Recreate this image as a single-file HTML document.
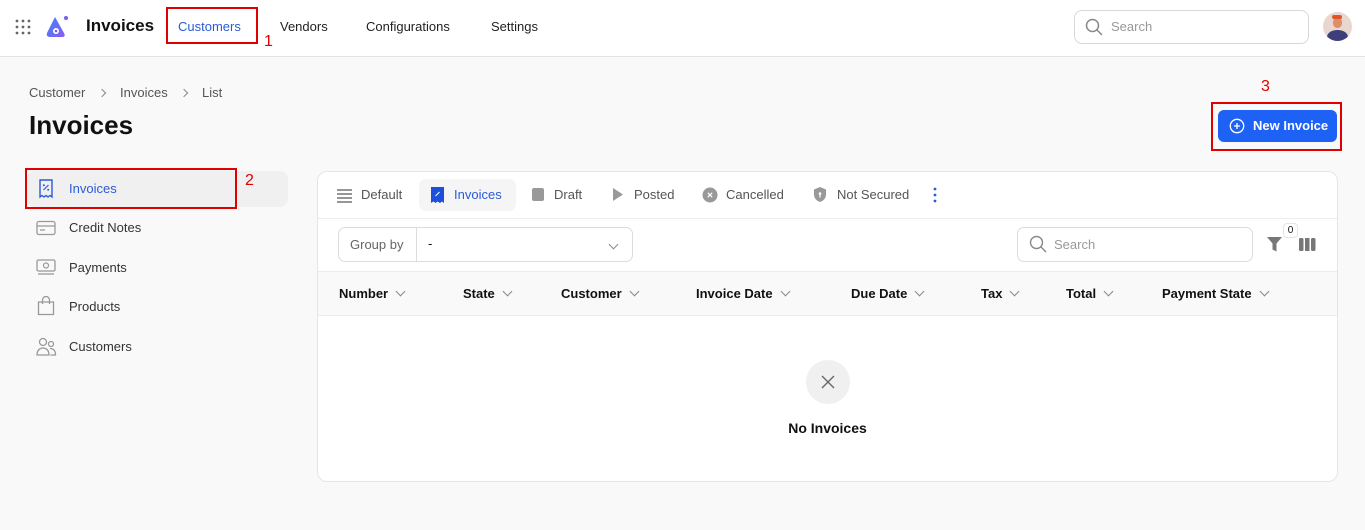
<!DOCTYPE html>
<html><head><meta charset="utf-8"><style>
*{box-sizing:border-box;margin:0;padding:0}
body{width:1365px;height:530px;background:#f9f9f9;font-family:"Liberation Sans",sans-serif;position:relative;overflow:hidden;color:#111}
.a{position:absolute}
.hdr{left:0;top:0;width:1365px;height:57px;background:#fff;border-bottom:1px solid #e3e3e3}
.nav{font-size:13px;color:#222;top:19px}
.red{border:2px solid #e00000}
.rn{color:#e00000;font-size:16px}
.side{font-size:13px;color:#333;left:69px}
.card{left:317px;top:171px;width:1021px;height:311px;background:#fff;border:1px solid #e5e5e5;border-radius:10px;overflow:hidden}
.tab{font-size:13px;color:#555;top:15px}
.th{font-size:13px;font-weight:bold;color:#111;top:114px}
.chev{display:inline-block;width:7px;height:7px;border-right:1.3px solid #888;border-bottom:1.3px solid #888;transform:rotate(45deg);margin-left:9px;position:relative;top:-3px}
.bc{font-size:13px;color:#555;top:85px}
.bch{width:6px;height:6px;border-right:1.3px solid #888;border-top:1.3px solid #888;transform:rotate(45deg);top:90px}
</style></head><body>
<div class="a hdr"></div>
<svg class="a" style="left:15px;top:19px" width="16" height="16"><g fill="#666"><circle cx="2" cy="2" r="1.4"/><circle cx="8" cy="2" r="1.4"/><circle cx="14" cy="2" r="1.4"/><circle cx="2" cy="8" r="1.4"/><circle cx="8" cy="8" r="1.4"/><circle cx="14" cy="8" r="1.4"/><circle cx="2" cy="14" r="1.4"/><circle cx="8" cy="14" r="1.4"/><circle cx="14" cy="14" r="1.4"/></g></svg>
<svg class="a" style="left:44px;top:14px" width="26" height="26" viewBox="0 0 26 26"><defs><linearGradient id="g" x1="0" y1="0" x2="1" y2="1"><stop offset="0" stop-color="#3b82f6"/><stop offset="1" stop-color="#8b5cf6"/></linearGradient></defs><path d="M11 3 L3 19 Q2 23 6 23 L18 23 Q22 23 20 19 Z" fill="url(#g)"/><circle cx="12" cy="17" r="3" fill="#fff"/><circle cx="12" cy="17" r="1.3" fill="#6d5cf6"/><circle cx="22" cy="4" r="2" fill="#7c5cf6"/></svg>
<div class="a" style="left:86px;top:16px;font-size:17px;font-weight:bold">Invoices</div>
<div class="a red" style="left:166px;top:7px;width:92px;height:37px"></div>
<div class="a nav" style="left:178px;color:#2a5bd7">Customers</div>
<div class="a rn" style="left:264px;top:33px">1</div>
<div class="a nav" style="left:280px">Vendors</div>
<div class="a nav" style="left:366px">Configurations</div>
<div class="a nav" style="left:491px">Settings</div>
<div class="a" style="left:1074px;top:10px;width:235px;height:34px;border:1px solid #d8d8d8;border-radius:8px;background:#fff"></div>
<svg class="a" style="left:1085px;top:18px" width="18" height="18"><circle cx="7.5" cy="7.5" r="6" fill="none" stroke="#888" stroke-width="1.5"/><path d="M12 12l5 5" stroke="#888" stroke-width="1.5"/></svg>
<div class="a" style="left:1111px;top:19px;font-size:13px;color:#999">Search</div>
<div class="a" style="left:1323px;top:12px;width:29px;height:29px;border-radius:50%;background:#e8d6cf;overflow:hidden"><div class="a" style="left:4px;top:18px;width:21px;height:14px;border-radius:50%;background:#3d3f7a"></div><div class="a" style="left:10px;top:5px;width:9px;height:11px;border-radius:45%;background:#e08d6a"></div><div class="a" style="left:9px;top:3px;width:10px;height:4px;border-radius:3px;background:#e0542a"></div></div>

<div class="a bc" style="left:29px">Customer</div>
<div class="a bch" style="left:99px"></div>
<div class="a bc" style="left:120px">Invoices</div>
<div class="a bch" style="left:181px"></div>
<div class="a bc" style="left:202px">List</div>
<div class="a" style="left:29px;top:110px;font-size:26px;font-weight:bold">Invoices</div>
<div class="a rn" style="left:1261px;top:78px">3</div>
<div class="a red" style="left:1211px;top:102px;width:131px;height:49px"></div>
<div class="a" style="left:1218px;top:110px;width:119px;height:32px;background:#1e62f5;border-radius:6px;color:#fff;font-size:13px;font-weight:bold;padding:8px 0 0 35px">New Invoice</div>
<svg class="a" style="left:1229px;top:118px" width="16" height="16"><circle cx="8" cy="8" r="6.7" fill="none" stroke="#fff" stroke-width="1.3"/><path d="M8 5v6M5 8h6" stroke="#fff" stroke-width="1.3"/></svg>

<div class="a" style="left:27px;top:171px;width:261px;height:36px;background:#f0f0f0;border-radius:8px"></div>
<div class="a red" style="left:25px;top:168px;width:212px;height:41px"></div>
<div class="a rn" style="left:245px;top:172px">2</div>
<svg class="a" style="left:38px;top:179px" width="16" height="20"><path d="M2 1h12v17l-2-1.5-2 1.5-2-1.5-2 1.5-2-1.5-2 1.5z" fill="none" stroke="#2a5bd7" stroke-width="1.4"/><path d="M5.5 11l5-5" stroke="#2a5bd7" stroke-width="1.2"/><circle cx="5.8" cy="6.3" r="1" fill="#2a5bd7"/><circle cx="10.2" cy="10.7" r="1" fill="#2a5bd7"/></svg>
<div class="a side" style="top:181px;color:#2a5bd7">Invoices</div>
<svg class="a" style="left:36px;top:220px" width="20" height="16"><rect x="1" y="1.5" width="18" height="13" rx="2" fill="none" stroke="#999" stroke-width="1.3"/><path d="M1 6h18M4 10h5" stroke="#999" stroke-width="1.3"/></svg>
<div class="a side" style="top:220px">Credit Notes</div>
<svg class="a" style="left:36px;top:259px" width="20" height="17"><rect x="1" y="1" width="18" height="11" rx="1.5" fill="none" stroke="#999" stroke-width="1.3"/><circle cx="10" cy="6.5" r="2.5" fill="none" stroke="#999" stroke-width="1.2"/><path d="M2 15h16" stroke="#999" stroke-width="1.3"/></svg>
<div class="a side" style="top:260px">Payments</div>
<svg class="a" style="left:37px;top:296px" width="18" height="20"><path d="M1.5 6h15v12.5h-15z" fill="none" stroke="#999" stroke-width="1.3"/><path d="M5.5 8V4a3.5 3.5 0 0 1 7 0v4" fill="none" stroke="#999" stroke-width="1.3"/></svg>
<div class="a side" style="top:299px">Products</div>
<svg class="a" style="left:36px;top:337px" width="21" height="20"><circle cx="7" cy="5" r="3.5" fill="none" stroke="#999" stroke-width="1.3"/><path d="M1 18c0-5 3-7 6-7s6 2 6 7z" fill="none" stroke="#999" stroke-width="1.3"/><circle cx="15" cy="7" r="2.5" fill="none" stroke="#999" stroke-width="1.3"/><path d="M14 11.5c3 0 5.5 1.5 5.5 6.5h-5" fill="none" stroke="#999" stroke-width="1.3"/></svg>
<div class="a side" style="top:339px">Customers</div>

<div class="a card">
 <svg class="a" style="left:19px;top:16px" width="15" height="15"><path d="M0 2h15M0 6h15M0 10h15M0 14h15" stroke="#888" stroke-width="1.8"/></svg>
 <div class="a tab" style="left:43px">Default</div>
 <div class="a" style="left:101px;top:7px;width:97px;height:32px;background:#f5f5f5;border-radius:7px"></div>
 <svg class="a" style="left:113px;top:14px" width="13" height="18"><path d="M0 1h13v16l-2-1.5-2 1.5-2.5-1.5-2 1.5-2-1.5-2.5 1.5z" fill="#1e4fd8"/><path d="M4.5 10l4-4" stroke="#fff" stroke-width="1"/></svg>
 <div class="a tab" style="left:136px;color:#2a5bd7">Invoices</div>
 <div class="a" style="left:214px;top:16px;width:12px;height:13px;background:#999;border-radius:2px"></div>
 <div class="a tab" style="left:236px">Draft</div>
 <svg class="a" style="left:294px;top:15px" width="12" height="15"><path d="M1 1l10 6.5-10 6.5z" fill="#999"/></svg>
 <div class="a tab" style="left:316px">Posted</div>
 <svg class="a" style="left:384px;top:15px" width="16" height="16"><circle cx="8" cy="8" r="7.5" fill="#999"/><path d="M5.8 5.8l4.4 4.4M10.2 5.8l-4.4 4.4" stroke="#fff" stroke-width="1.2"/></svg>
 <div class="a tab" style="left:408px">Cancelled</div>
 <svg class="a" style="left:495px;top:14px" width="14" height="17"><path d="M7 1l6 2.5v5c0 4-3 6.5-6 7.5-3-1-6-3.5-6-7.5v-5z" fill="#999"/><circle cx="7" cy="7.5" r="1.3" fill="#fff"/><path d="M7 8.5v3" stroke="#fff" stroke-width="1.2"/></svg>
 <div class="a tab" style="left:519px">Not Secured</div>
 <svg class="a" style="left:615px;top:15px" width="4" height="16"><g fill="#2a5bd7"><circle cx="2" cy="2" r="1.4"/><circle cx="2" cy="8" r="1.4"/><circle cx="2" cy="14" r="1.4"/></g></svg>
 <div class="a" style="left:0;top:46px;width:1021px;height:1px;background:#ececec"></div>
 <div class="a" style="left:20px;top:55px;width:295px;height:35px;border:1px solid #dcdcdc;border-radius:7px"></div>
 <div class="a" style="left:98px;top:56px;width:1px;height:33px;background:#dcdcdc"></div>
 <div class="a" style="left:32px;top:65px;font-size:13px;color:#666">Group by</div>
 <div class="a" style="left:110px;top:64px;font-size:13px">-</div>
 <div class="a" style="left:292px;top:66px"><span class="chev" style="margin:0"></span></div>
 <div class="a" style="left:699px;top:55px;width:236px;height:35px;border:1px solid #dcdcdc;border-radius:7px"></div>
 <svg class="a" style="left:711px;top:63px" width="18" height="18"><circle cx="7.5" cy="7.5" r="6" fill="none" stroke="#888" stroke-width="1.4"/><path d="M12 12l5 5" stroke="#888" stroke-width="1.4"/></svg>
 <div class="a" style="left:736px;top:65px;font-size:13px;color:#999">Search</div>
 <svg class="a" style="left:949px;top:64px" width="15" height="16"><path d="M0 1h15l-5.5 6.5v8l-4-2v-6z" fill="#777"/></svg>
 <div class="a" style="left:965px;top:51px;width:15px;height:15px;border:1px solid #e5e5e5;border-radius:4px;background:#fff;font-size:10px;text-align:center;line-height:13px">0</div>
 <svg class="a" style="left:981px;top:66px" width="17" height="13"><rect x="0" y="0" width="4.5" height="13" rx="1.5" fill="#777"/><rect x="6" y="0" width="4.5" height="13" fill="#777"/><rect x="12" y="0" width="4.5" height="13" rx="1.5" fill="#777"/></svg>
 <div class="a" style="left:0;top:99px;width:1021px;height:45px;background:#f9f9f9;border-top:1px solid #ececec;border-bottom:1px solid #ececec"></div>
 <div class="a th" style="left:21px">Number<span class="chev"></span></div>
 <div class="a th" style="left:145px">State<span class="chev"></span></div>
 <div class="a th" style="left:243px">Customer<span class="chev"></span></div>
 <div class="a th" style="left:378px">Invoice Date<span class="chev"></span></div>
 <div class="a th" style="left:533px">Due Date<span class="chev"></span></div>
 <div class="a th" style="left:663px">Tax<span class="chev"></span></div>
 <div class="a th" style="left:748px">Total<span class="chev"></span></div>
 <div class="a th" style="left:844px">Payment State<span class="chev"></span></div>
 <div class="a" style="left:488px;top:188px;width:44px;height:44px;border-radius:50%;background:#f0f0f0"></div>
 <svg class="a" style="left:503px;top:203px" width="14" height="14"><path d="M1 1l12 12M13 1L1 13" stroke="#666" stroke-width="1.4"/></svg>
 <div class="a" style="left:0;top:248px;width:1019px;text-align:center;font-size:14px;font-weight:bold">No Invoices</div>
</div>
</body></html>
